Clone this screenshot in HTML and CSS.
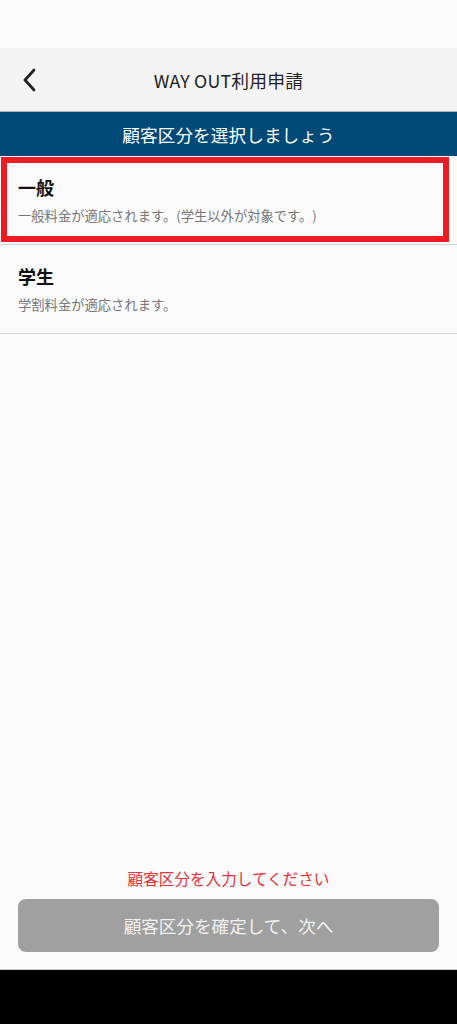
FILE: index.html
```html
<!DOCTYPE html>
<html lang="ja">
<head>
<meta charset="utf-8">
<title>WAY OUT利用申請</title>
<link rel="stylesheet" href="styles.css">
</head>
<body>
<div class="screen">
  <div class="status"></div>
  <header class="header">
    <button class="back" aria-label="戻る">
      <svg width="16" height="24" viewBox="0 0 16 24"><path d="M12 2 L3 12 L12 22" fill="none" stroke="#222" stroke-width="2.8" stroke-linecap="round" stroke-linejoin="round"/></svg>
    </button>
    <h1 class="title">WAY OUT利用申請</h1>
  </header>
  <div class="banner">顧客区分を選択しましょう</div>
  <ul class="list">
    <li class="item selected">
      <div class="item-title">一般</div>
      <div class="item-desc">一般料金が適応されます。(学生以外が対象です。)</div>
      <span class="highlight"></span>
    </li>
    <li class="item">
      <div class="item-title">学生</div>
      <div class="item-desc">学割料金が適応されます。</div>
    </li>
  </ul>
  <div class="spacer"></div>
  <footer class="footer">
    <p class="error">顧客区分を入力してください</p>
    <button class="confirm" disabled>顧客区分を確定して、次へ</button>
  </footer>
  <div class="navbar"></div>
</div>
</body>
</html>
```
FILE: styles.css
```css
* { box-sizing: border-box; }
html, body { margin: 0; padding: 0; }
body {
  background: #fafafa;
  font-family: "Noto Sans CJK JP", "Noto Sans", sans-serif;
  color: #222;
  text-spacing-trim: space-all;
}
.screen {
  width: 457px;
  height: 1024px;
  display: flex;
  flex-direction: column;
  background: #fafafa;
}
.status { height: 48px; background: #fafafa; flex: none; }
.header {
  flex: none;
  height: 64px;
  background: #f4f4f4;
  border-bottom: 1px solid #aeaeae;
  display: flex;
  align-items: center;
  justify-content: center;
  position: relative;
}
.back {
  position: absolute;
  left: 22px;
  top: 20px;
  border: 0;
  background: none;
  padding: 0;
  width: 16px;
  height: 24px;
}
.back svg { display: block; }
.title {
  margin: 0;
  font-size: 17.8px;
  font-weight: 400;
  color: #222;
  letter-spacing: 0.2px;
}
.banner {
  flex: none;
  height: 44px;
  background: #014a77;
  color: #fff;
  font-size: 17.6px;
  display: flex;
  align-items: center;
  justify-content: center;
  letter-spacing: 0.1px;
}
.list { list-style: none; margin: 0; padding: 0; flex: none; }
.item {
  height: 89px;
  border-bottom: 1px solid #d2d2d2;
  padding: 18px 18px 0;
  position: relative;
}
.item-title {
  font-size: 18px;
  font-weight: 700;
  color: #111;
  line-height: 26px;
}
.item-desc {
  font-size: 13.3px;
  color: #777;
  line-height: 20px;
  margin-top: 6px;
}
.highlight {
  position: absolute;
  left: 1px;
  top: 1px;
  width: 448px;
  height: 85px;
  border: 6px solid #ec1c24;
  pointer-events: none;
}
.spacer { flex: 1; }
.footer {
  flex: none;
  padding: 0 18px 17px;
  border-bottom: 1px solid #cfcfcf;
}
.error {
  margin: 0 0 10px;
  text-align: center;
  color: #e5333b;
  font-size: 15.6px;
  line-height: 22px;
}
.confirm {
  display: block;
  width: 100%;
  height: 53px;
  border: 0;
  border-radius: 8px;
  background: #a0a0a0;
  color: #f0f0f0;
  font-family: inherit;
  font-size: 17.6px;
}
.navbar { flex: none; height: 54px; background: #000; }
```
